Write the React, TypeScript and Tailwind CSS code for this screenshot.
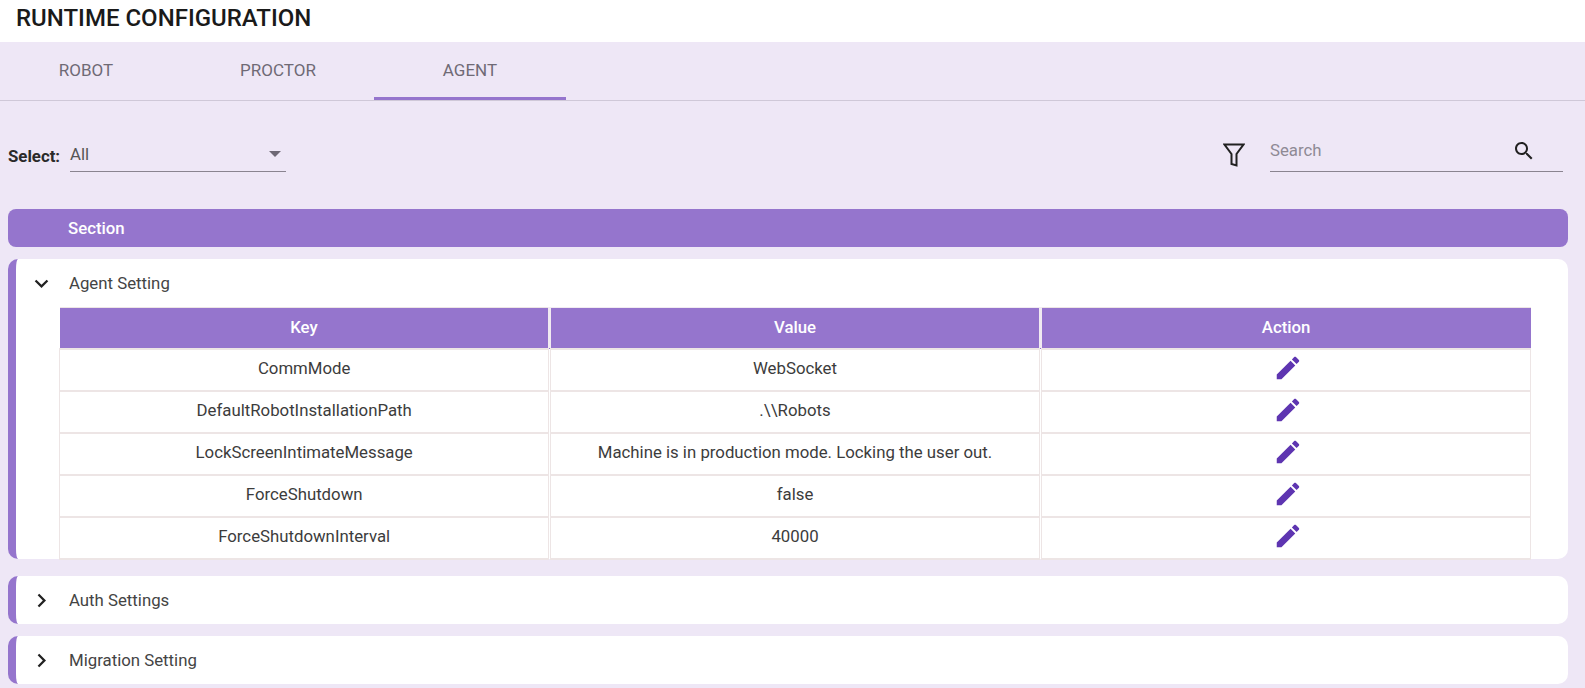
const ROWS = [
  { key: 'CommMode', value: 'WebSocket' },
  { key: 'DefaultRobotInstallationPath', value: '.\\\\Robots' },
  { key: 'LockScreenIntimateMessage', value: 'Machine is in production mode. Locking the user out.' },
  { key: 'ForceShutdown', value: 'false' },
  { key: 'ForceShutdownInterval', value: '40000' },
]

function EditIcon() {
  return (
    <svg viewBox="0 0 24 24" className="w-[30px] h-[30px] fill-[#5e35b1]">
      <path d="M3 17.25V21h3.75L17.81 9.94l-3.75-3.75L3 17.25zM20.71 7.04c.39-.39.39-1.02 0-1.41l-2.34-2.34c-.39-.39-1.02-.39-1.41 0l-1.83 1.83 3.75 3.75 1.83-1.83z" />
    </svg>
  )
}

function Chevron({ open }: { open?: boolean }) {
  return (
    <svg viewBox="0 0 24 24" className="w-[27px] h-[27px] fill-[#212121]">
      <path d={open ? 'M16.59 8.59 12 13.17 7.41 8.59 6 10l6 6 6-6z' : 'M10 6 8.59 7.41 13.17 12l-4.58 4.59L10 18l6-6z'} />
    </svg>
  )
}

function CollapsedPanel({ title }: { title: string }) {
  return (
    <div className="h-12 flex items-center bg-white rounded-[10px] border-l-8 border-[#9575cd] pl-[12px] text-[16.8px] text-[#444]">
      <Chevron />
      <span className="ml-[14px] pt-[2px]">{title}</span>
    </div>
  )
}

export default function App() {
  return (
    <div className="w-[1585px] h-[688px] overflow-hidden bg-[#eee7f6] font-['Roboto',sans-serif]">
      {/* Title */}
      <div className="h-[42px] bg-white pl-4 pb-[6px] flex items-center text-[24px] font-medium text-[#1a1a1a]">
        RUNTIME CONFIGURATION
      </div>

      {/* Tabs */}
      <div className="h-[59px] flex border-b border-[#cfc8d8] text-[17px] font-normal text-[#6f6a75]">
        <div className="w-[182px] pr-[10px] flex items-center justify-center">ROBOT</div>
        <div className="w-[192px] flex items-center justify-center">PROCTOR</div>
        <div className="w-[192px] h-[58px] flex items-center justify-center border-b-[3px] border-[#9575cd] pt-[3px]">AGENT</div>
      </div>

      {/* Toolbar */}
      <div className="h-[108px] pl-2 pr-[22px] flex items-center justify-between">
        <div className="flex items-center mb-[2px]">
          <span className="w-[62px] pt-[6px] text-[16.8px] font-bold text-[#2a2a2a]">Select:</span>
          <div className="w-[216px] h-[35px] flex items-center justify-between border-b border-[#8a8490] pr-[5px] text-[16.8px] text-[#555]">
            <span className="pt-[2px]">All</span>
            <svg viewBox="0 0 12 6" className="w-3 h-[6px] fill-[#6e6875]">
              <path d="M0 0h12L6 6z" />
            </svg>
          </div>
        </div>
        <div className="flex items-center">
          <svg viewBox="0 0 22 24" className="w-[22px] h-6 fill-none stroke-[#212121] stroke-2 mr-[25px]">
            <path d="M1.5 1.5h19L13.5 11v11.5l-5-1.5V11z" />
          </svg>
          <div className="w-[293px] h-[38px] mb-[5px] flex items-center justify-between border-b border-[#8a8490] pr-[27px] pb-[3px] text-[16.8px] text-[#8f8a95]">
            <span>Search</span>
            <svg viewBox="0 0 24 24" className="w-6 h-6 fill-[#212121]">
              <path d="M15.5 14h-.79l-.28-.27C15.41 12.59 16 11.11 16 9.5 16 5.91 13.09 3 9.5 3S3 5.91 3 9.5 5.91 16 9.5 16c1.61 0 3.09-.59 4.23-1.57l.27.28v.79l5 4.99L20.49 19l-4.99-5zm-6 0C7.01 14 5 11.99 5 9.5S7.01 5 9.5 5 14 7.01 14 9.5 11.99 14 9.5 14z" />
            </svg>
          </div>
        </div>
      </div>

      <div className="pl-2 pr-[17px] flex flex-col">
        {/* Section header */}
        <div className="h-[38px] flex items-center bg-[#9575cd] rounded-lg pl-[60px] pt-[2px] text-[16.8px] font-medium text-white">
          Section
        </div>

        {/* Agent panel */}
        <div className="mt-3 h-[300px] bg-white rounded-[10px] border-l-8 border-[#9575cd] pl-[43px] pr-[37px]">
          <div className="h-[48px] pt-[1px] -ml-[31px] flex items-center text-[16.8px] text-[#444]">
            <Chevron open />
            <span className="ml-[14px]">Agent Setting</span>
          </div>
          <table className="w-full table-fixed border-collapse text-[16.8px] text-[#3c3c3c] text-center">
            <thead>
              <tr className="h-[41px] bg-[#9575cd] text-white">
                <th className="font-medium border-t border-[#ede5e5]">Key</th>
                <th className="font-medium border-t border-x-[3px] border-[#f1ebf1]">Value</th>
                <th className="font-medium border-t border-[#ede5e5]">Action</th>
              </tr>
            </thead>
            <tbody>
              {ROWS.map((r) => (
                <tr key={r.key} className="h-[42px]">
                  <td className="border-y-2 border-l border-[#ede5e5] pb-[2px]">{r.key}</td>
                  <td className="border-y-2 border-x-[3px] border-x-[#ede5e5] border-y-[#ede5e5] border-double pb-[2px]">{r.value}</td>
                  <td className="border-y-2 border-r border-[#ede5e5] pb-[4px]">
                    <div className="flex justify-center pl-[4px]"><EditIcon /></div>
                  </td>
                </tr>
              ))}
            </tbody>
          </table>
        </div>

        <div className="mt-[17px] flex flex-col gap-3">
          <CollapsedPanel title="Auth Settings" />
          <CollapsedPanel title="Migration Setting" />
        </div>
      </div>
    </div>
  )
}
